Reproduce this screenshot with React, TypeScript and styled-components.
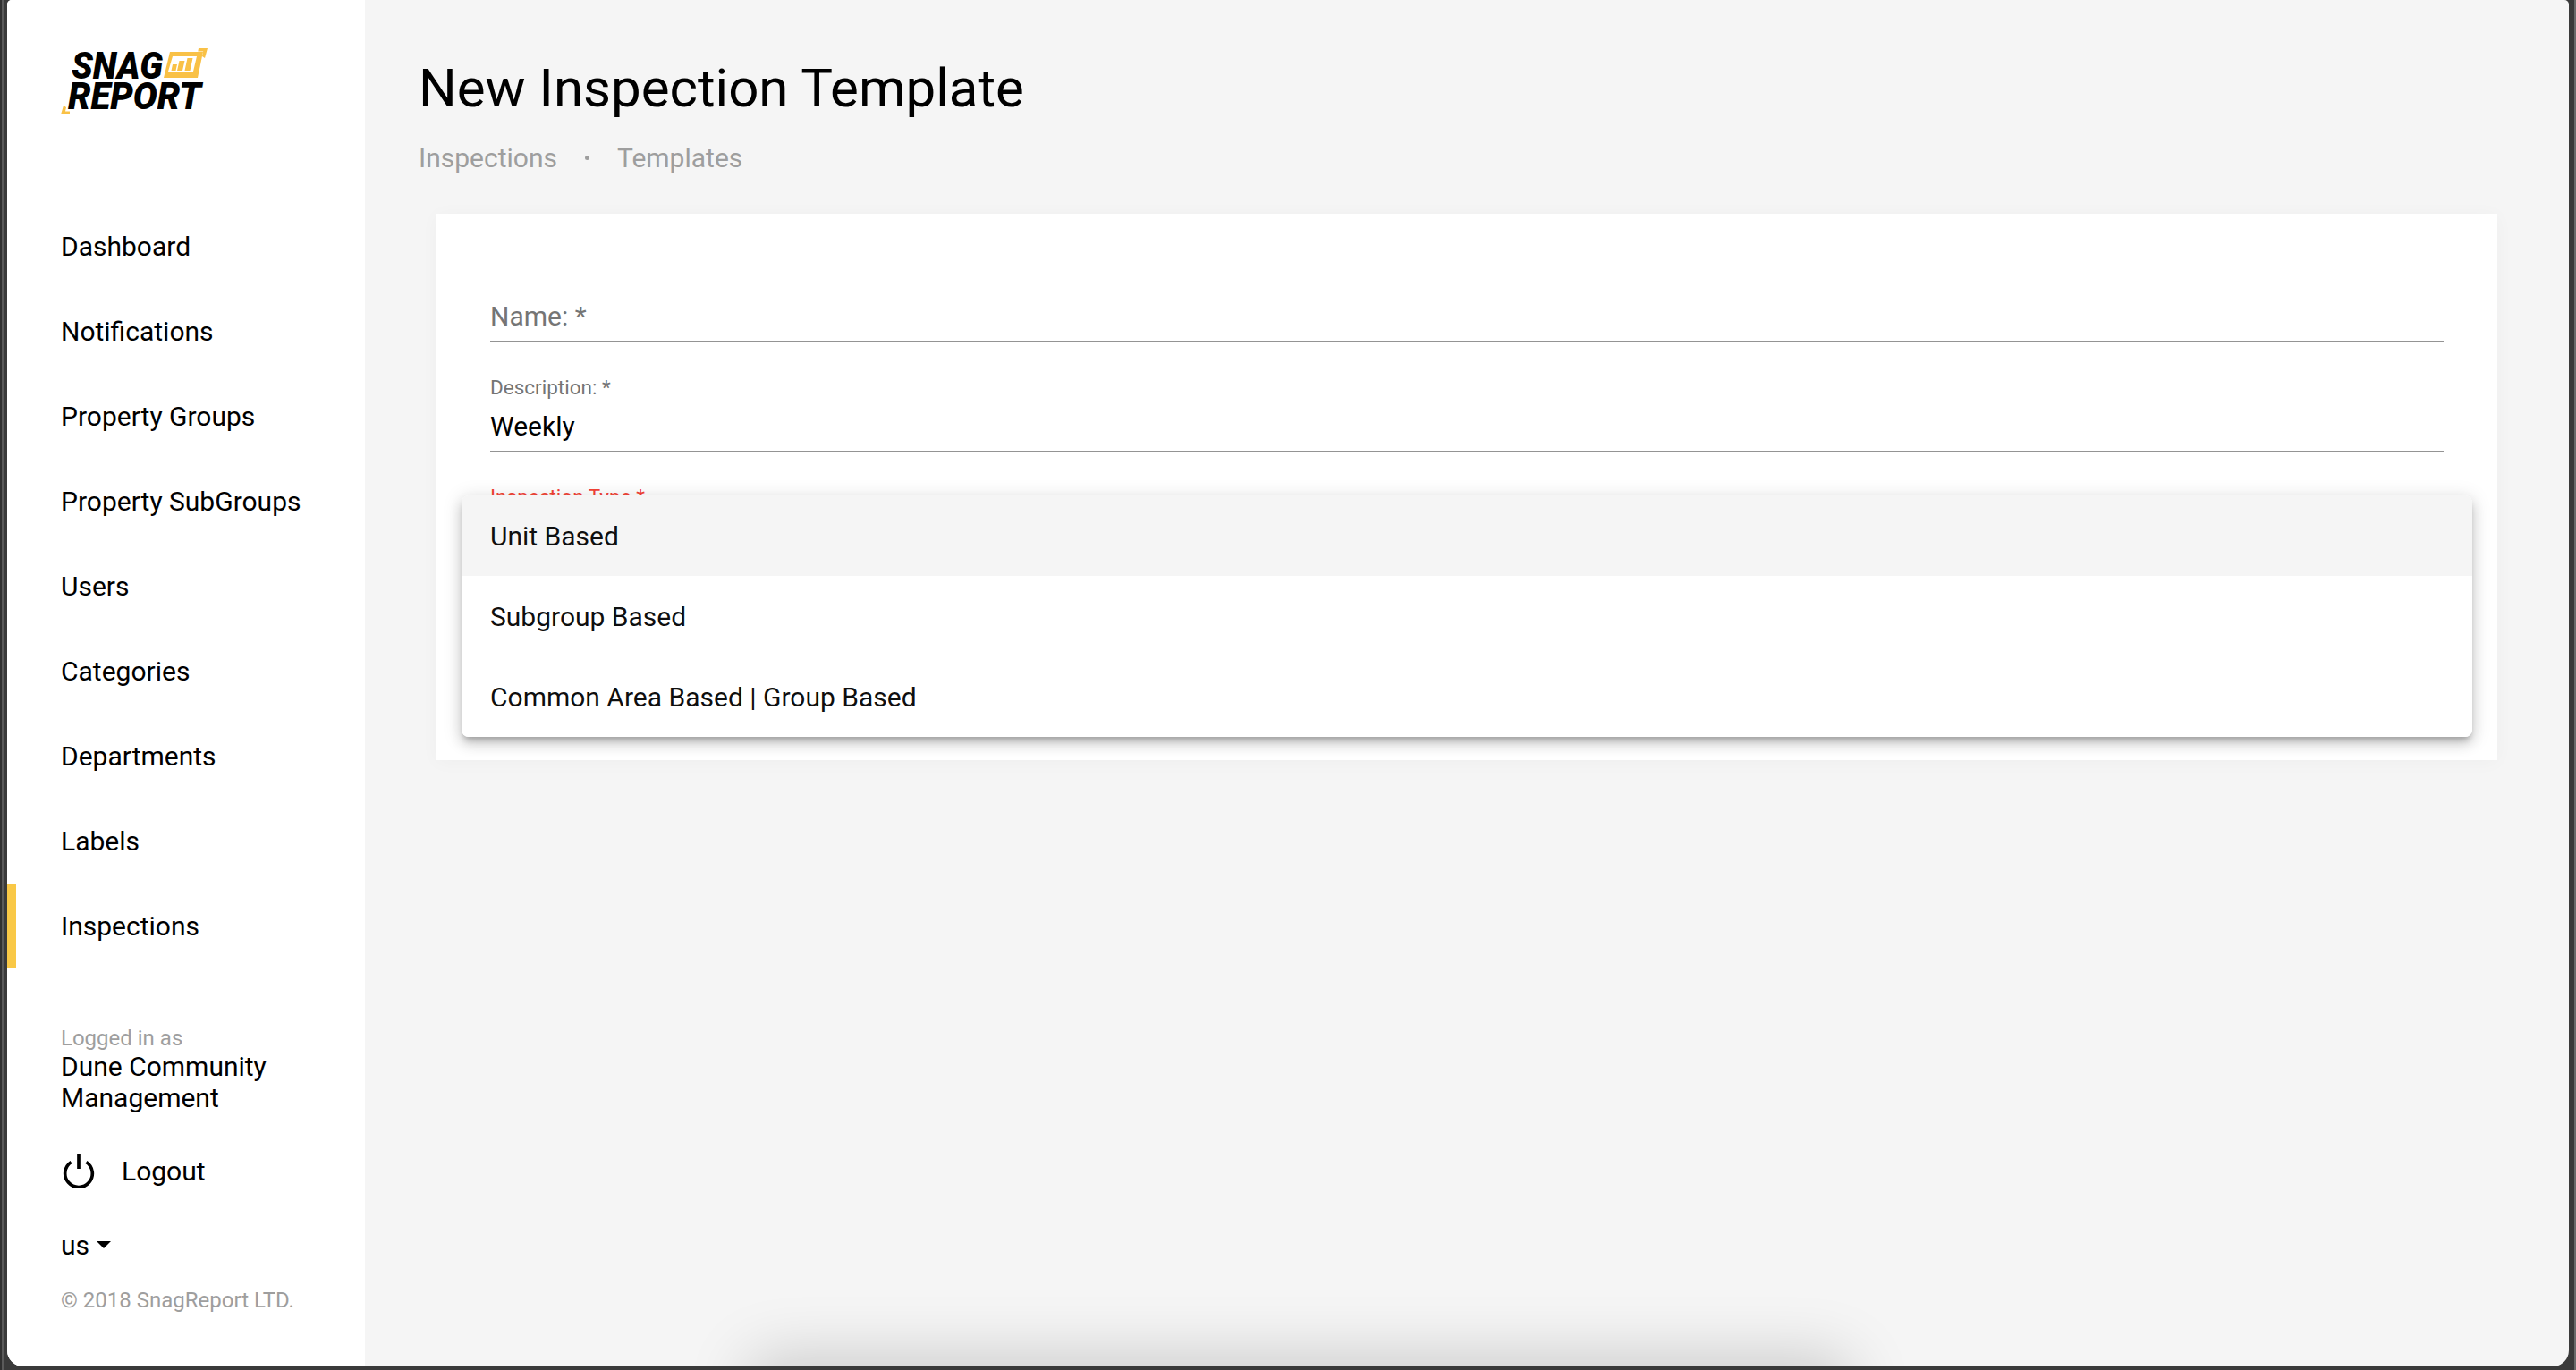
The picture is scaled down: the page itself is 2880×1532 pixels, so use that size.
import React from 'react';
import styled, { createGlobalStyle } from 'styled-components';

const navItems = [
  'Dashboard',
  'Notifications',
  'Property Groups',
  'Property SubGroups',
  'Users',
  'Categories',
  'Departments',
  'Labels',
  'Inspections',
];

const menuItems = ['Unit Based', 'Subgroup Based', 'Common Area Based | Group Based'];

const GlobalStyle = createGlobalStyle`
  html, body {
    margin: 0;
    padding: 0;
    height: 100%;
  }
  body {
    font-family: Roboto, "Liberation Sans", sans-serif;
    color: #000;
    background: #3a3a3a;
  }
`;

const Frame = styled.div`
  width: 2880px;
  height: 1532px;
  box-sizing: border-box;
  padding: 0 8px 4px;
  background: #3a3a3a;
  box-shadow: inset 2px 0 0 #303030, inset 5px 0 0 #5a5a5a, inset -2px 0 0 #6a6a6a;
`;

const Screen = styled.div`
  position: relative;
  display: flex;
  height: 100%;
  overflow: hidden;
  border-radius: 5px 5px 18px 18px;
  background: #f5f5f5;
`;

const Sidebar = styled.aside`
  flex: 0 0 400px;
  display: flex;
  flex-direction: column;
  background: #fff;
`;

const LogoWrap = styled.div`
  height: 228px;
  padding: 40px 0 0 60px;
  box-sizing: border-box;
`;

const LogoText = styled.text`
  font-family: Roboto, "Liberation Sans", sans-serif;
  font-weight: 900;
  font-style: italic;
  font-size: 43px;
  fill: #000;
`;

const Nav = styled.nav`
  display: flex;
  flex-direction: column;
`;

const NavItem = styled.a<{ $active?: boolean }>`
  display: flex;
  align-items: center;
  height: 95px;
  padding-left: 50px;
  font-size: 30px;
  border-left: 10px solid ${(p) => (p.$active ? '#f9c846' : 'transparent')};
`;

const Account = styled.div`
  padding: 64px 0 0 60px;
`;

const Muted = styled.div`
  font-size: 24px;
  line-height: 28px;
  color: #9e9e9e;
`;

const AccountName = styled.div`
  width: 280px;
  font-size: 30px;
  line-height: 35px;
`;

const Logout = styled.div`
  display: flex;
  align-items: center;
  gap: 29px;
  margin: 43px 0 0 1px;
  font-size: 30px;
  height: 42px;
`;

const Lang = styled.div`
  display: flex;
  align-items: center;
  gap: 8px;
  margin-top: 44px;
  font-size: 30px;
  height: 36px;
`;

const Caret = styled.span`
  width: 0;
  height: 0;
  border-left: 8px solid transparent;
  border-right: 8px solid transparent;
  border-top: 8px solid #000;
`;

const Copyright = styled(Muted)`
  margin-top: 30px;
`;

const Main = styled.main`
  flex: 1;
  min-width: 0;
  padding: 64px 80px 0 60px;
`;

const Title = styled.h1`
  margin: 0;
  font-size: 60px;
  line-height: 70px;
  font-weight: 400;
`;

const Crumbs = styled.div`
  display: flex;
  align-items: center;
  gap: 31px;
  margin-top: 25px;
  font-size: 30px;
  line-height: 35px;
  color: #9e9e9e;
`;

const Dot = styled.span`
  width: 5px;
  height: 5px;
  border-radius: 50%;
  background: #9e9e9e;
`;

const Card = styled.section`
  position: relative;
  margin: 45px 0 0 20px;
  height: 611px;
  box-sizing: border-box;
  padding: 0 60px;
  background: #fff;
  box-shadow: 0 2px 20px rgba(0, 0, 0, 0.03);
`;

const Field = styled.div<{ $h: number }>`
  display: flex;
  flex-direction: column;
  justify-content: flex-end;
  height: ${(p) => p.$h}px;
  box-sizing: border-box;
  padding-bottom: 10px;
  border-bottom: 2px solid #949494;
`;

const Placeholder = styled.div`
  font-size: 30px;
  line-height: 35px;
  color: #757575;
`;

const SmallLabel = styled.div<{ $error?: boolean }>`
  font-size: 22.5px;
  line-height: 26px;
  margin-bottom: 13px;
  color: ${(p) => (p.$error ? '#f44336' : '#757575')};
`;

const Value = styled.div`
  font-size: 30px;
  line-height: 35px;
`;

const TypeLabel = styled(SmallLabel)`
  margin: 36px 0 0;
`;

const Menu = styled.ul`
  position: absolute;
  left: 28px;
  right: 28px;
  top: 315px;
  margin: 0;
  padding: 0;
  list-style: none;
  background: #fff;
  border-radius: 8px;
  overflow: hidden;
  box-shadow: 0 6px 6px -3px rgba(0, 0, 0, 0.25), 0 8px 14px 1px rgba(0, 0, 0, 0.12), 0 3px 20px 3px rgba(0, 0, 0, 0.1);
`;

const MenuItem = styled.li<{ $active?: boolean }>`
  display: flex;
  align-items: center;
  height: 90px;
  padding-left: 32px;
  font-size: 30px;
  color: rgba(0, 0, 0, 0.95);
  background: ${(p) => (p.$active ? '#f5f5f5' : '#fff')};
`;

// shadow of a dialog sitting just under the visible area
const OffscreenDialog = styled.div`
  position: absolute;
  left: 840px;
  top: 1528px;
  width: 1210px;
  height: 400px;
  border-radius: 8px;
  box-shadow: 0 0 70px 10px rgba(0, 0, 0, 0.18);
`;

const Logo = () => (
  <svg width="170" height="90" viewBox="0 -14 170 90">
    <LogoText x="12" y="34" textLength="102" lengthAdjust="spacingAndGlyphs">SNAG</LogoText>
    <LogoText x="8" y="68" textLength="149" lengthAdjust="spacingAndGlyphs">REPORT</LogoText>
    <path d="M122 4h37l-6 29h-38z" fill="#f9c146" />
    <path d="M125 9h27l-4 17h-28z" fill="#fff" />
    <path d="M125 18h5l-1.500 7h-5zM132.500 14h6l-2.500 11h-6zM141.500 11h6l-3 14h-6z" fill="#f9c146" />
    <path d="M154 0h10l-3 11-3-2 1.200-5.500h-5.900z" fill="#f9c146" />
    <path d="M3 64l3 2-1 4.500h5v3.500H0z" fill="#f9c146" />
  </svg>
);

const PowerIcon = () => (
  <svg width="38" height="38" viewBox="0 0 36 36" fill="none" stroke="#000" strokeWidth="3.500">
    <path d="M18 1v15" />
    <path d="M10 9a14.500 14.500 0 1 0 16 0" />
  </svg>
);

export default function App() {
  return (
    <>
      <GlobalStyle />
      <Frame>
        <Screen>
          <Sidebar>
            <LogoWrap>
              <Logo />
            </LogoWrap>
            <Nav>
              {navItems.map((item) => (
                <NavItem key={item} $active={item === 'Inspections'}>
                  {item}
                </NavItem>
              ))}
            </Nav>
            <Account>
              <Muted>Logged in as</Muted>
              <AccountName>Dune Community Management</AccountName>
              <Logout>
                <PowerIcon />
                <span>Logout</span>
              </Logout>
              <Lang>
                us <Caret />
              </Lang>
              <Copyright>© 2018 SnagReport LTD.</Copyright>
            </Account>
          </Sidebar>
          <Main>
            <Title>New Inspection Template</Title>
            <Crumbs>
              <span>Inspections</span>
              <Dot />
              <span>Templates</span>
            </Crumbs>
            <Card>
              <Field $h={144}>
                <Placeholder>Name: *</Placeholder>
              </Field>
              <Field $h={123}>
                <SmallLabel>Description: *</SmallLabel>
                <Value>Weekly</Value>
              </Field>
              <TypeLabel $error>Inspection Type *</TypeLabel>
              <Menu>
                {menuItems.map((item, i) => (
                  <MenuItem key={item} $active={i === 0}>
                    {item}
                  </MenuItem>
                ))}
              </Menu>
            </Card>
          </Main>
          <OffscreenDialog />
        </Screen>
      </Frame>
    </>
  );
}
